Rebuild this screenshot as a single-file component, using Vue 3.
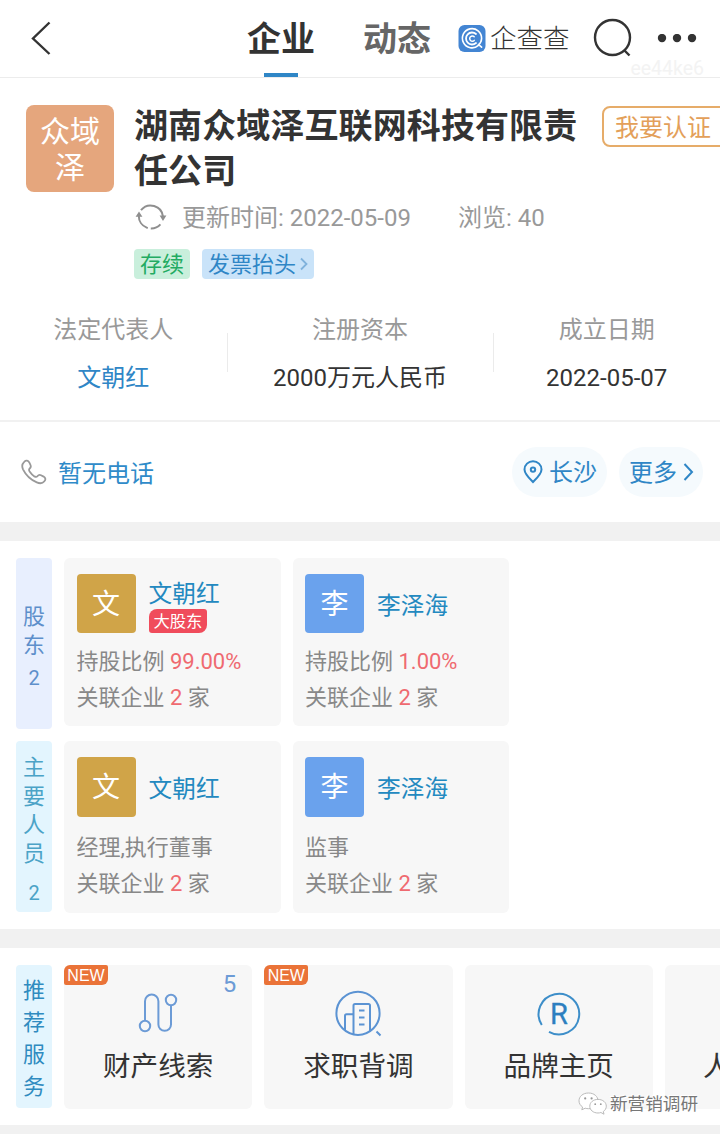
<template>
  <div class="page">
    <header class="topbar">
      <svg class="back" width="22" height="36" viewBox="0 0 22 36">
        <path d="M19.5 1.5 L3 17.5 L19.5 33" />
      </svg>
      <nav class="tabs">
        <span class="tab active">企业</span>
        <span class="tab">动态</span>
      </nav>
      <div class="brand">
        <svg width="28" height="28" viewBox="0 0 28 28">
          <rect x="0.5" y="0" width="27" height="27" rx="6" fill="#4385d3" />
          <g fill="none" stroke="#fff" stroke-linecap="round">
            <path d="M20.4 20.4 A9.6 9.6 0 1 1 23.6 13.5 Q23.4 17.5 20.6 19.6 L23.6 22.2" stroke-width="1.6" />
            <path d="M18 9 A6 6 0 1 0 18 18" stroke-width="1.8" />
            <path d="M16.2 11.8 A2.6 2.6 0 1 0 16.2 15.4" stroke-width="1.5" />
          </g>
        </svg>
        <span>企查查</span>
      </div>
      <svg class="search" width="40" height="42" viewBox="0 0 40 42">
        <circle cx="19.5" cy="19.5" r="17.5" />
        <path d="M31.5 32.5 L36.5 37.5" />
      </svg>
      <svg class="dots" width="40" height="10" viewBox="0 0 40 10">
        <circle cx="5" cy="4" r="4.2" />
        <circle cx="20" cy="4" r="4.2" />
        <circle cx="35" cy="4" r="4.2" />
      </svg>
      <span class="user-mark">ee44ke6</span>
    </header>

    <section class="profile">
      <div class="logo">众域<br />泽</div>
      <div class="profile-main">
        <h1>湖南众域泽互联网科技有限责任公司</h1>
        <div class="meta">
          <svg width="32" height="30" viewBox="0 0 32 30">
            <g fill="none" stroke="#8f8f8f" stroke-width="2">
              <path d="M6 7.2 A12.4 12.4 0 0 1 28 13.6" />
              <path d="M3.8 13 A12.4 12.4 0 0 0 25.4 21.4" stroke-dasharray="16 3 20" />
            </g>
            <path d="M0.6 13.8 L4 8.4 L7.4 13.8 Z M24.6 12.6 L31.4 12.6 L28 18 Z" fill="#8f8f8f" />
          </svg>
          <span class="updated">更新时间: 2022-05-09</span>
          <span>浏览: 40</span>
        </div>
        <div class="tags">
          <span class="tag green">存续</span>
          <span class="tag blue">发票抬头<svg width="8" height="14" viewBox="0 0 8 14"><path d="M1 1.5 L6.5 7 L1 12.5" /></svg></span>
        </div>
      </div>
      <div class="verify">我要认证</div>
    </section>

    <section class="stats">
      <div v-for="s in stats" :key="s.label" class="stat">
        <span class="stat-label">{{ s.label }}</span>
        <span class="stat-value" :class="{ link: s.link }">{{ s.value }}</span>
      </div>
    </section>

    <section class="contact">
      <svg width="26" height="26" viewBox="0 0 26 26">
        <path class="phone" d="M3.2 2.8 C5 1 7.2 1.4 8.4 3.6 L9.5 6 C10.2 7.6 9.8 8.6 8.7 9.5 C7.7 10.4 7.8 11.3 8.8 12.8 C10 14.6 11.6 16.3 13.4 17.4 C14.8 18.2 15.6 18.2 16.4 17.2 C17.4 16 18.6 15.6 20 16.3 L22.6 17.6 C24.6 18.8 24.9 20.6 23.4 22.2 C21.6 24.4 18.8 24.7 15.8 23.4 C9.6 20.6 4.8 16 2 10.3 C0.7 7.4 1 4.9 3.2 2.8 Z" />
      </svg>
      <span class="phone-text">暂无电话</span>
      <div class="pill city">
        <svg width="20" height="24" viewBox="0 0 20 24">
          <path d="M10 22 C6 18 1.5 13.8 1.5 9.4 A8.5 8.2 0 0 1 18.5 9.4 C18.5 13.8 14 18 10 22 Z" />
          <circle cx="10" cy="9.6" r="2.2" />
        </svg>
        <span>长沙</span>
      </div>
      <div class="pill more">
        <span>更多</span>
        <svg width="12" height="20" viewBox="0 0 12 20"><path d="M1.5 2 L9 10 L1.5 18" /></svg>
      </div>
    </section>

    <div class="band"></div>

    <section class="people">
      <div v-for="g in groups" :key="g.title" class="group" :class="g.kind">
        <div class="side">
          <span class="side-title">{{ g.title }}</span>
          <span class="side-count">2</span>
        </div>
        <div v-for="p in g.list" :key="p.name" class="person">
          <div class="person-head">
            <div class="face" :class="p.color">{{ p.name[0] }}</div>
            <div class="who">
              <span class="name">{{ p.name }}</span>
              <span v-if="p.badge" class="badge">{{ p.badge }}</span>
            </div>
          </div>
          <p class="line">{{ p.text }} <em v-if="p.ratio">{{ p.ratio }}</em></p>
          <p class="line">关联企业 <em>2</em> 家</p>
        </div>
      </div>
    </section>

    <div class="band"></div>

    <section class="services">
      <div class="side services-side"><span class="side-title">推荐服务</span></div>
      <div class="service">
        <span class="new">NEW</span>
        <span class="count">5</span>
        <svg width="50" height="50" viewBox="0 0 50 50">
          <g fill="none" stroke="#6c9bd6" stroke-width="2">
            <circle cx="12" cy="36" r="5.2" />
            <circle cx="38" cy="10" r="5.2" />
            <path d="M12 30.8 V11.2 A6.7 6.7 0 0 1 25.4 11.2 V34.5 A6.3 6.3 0 0 0 38 34.5 V15.2" />
          </g>
        </svg>
        <span class="service-name">财产线索</span>
      </div>
      <div class="service">
        <span class="new">NEW</span>
        <svg width="50" height="50" viewBox="0 0 50 50">
          <g fill="none" stroke="#5b93d3" stroke-width="2">
            <circle cx="25" cy="23.3" r="21.6" />
            <path d="M20.5 44 V15.5 Q20.5 14 22 14 H35.5 Q37 14 37 15.5 V41" />
            <path d="M20.5 24.3 H13.5 Q12 24.3 12 25.8 V40" />
            <path d="M26 20.5 H31.5 M26 27.5 H31.5 M26 34.5 H31.5 M43.5 41.5 L47.5 45.5" />
          </g>
        </svg>
        <span class="service-name">求职背调</span>
      </div>
      <div class="service">
        <svg width="50" height="50" viewBox="0 0 50 50">
          <path d="M7.8 35 A20.3 20.3 0 1 1 15 41.8" fill="none" stroke="#3d8ec9" stroke-width="2" />
          <text x="25" y="34" text-anchor="middle">R</text>
        </svg>
        <span class="service-name">品牌主页</span>
      </div>
      <div class="service cut"><span class="service-name">人</span></div>
    </section>

    <div class="band last"></div>

    <div class="account">
      <svg width="30" height="26" viewBox="0 0 30 26">
        <g fill="#fff" stroke="#bbb" stroke-width="1">
          <path d="M10.5 2 C5 2 1 5.4 1 9.8 C1 12.4 2.4 14.6 4.6 16 L3.8 18.8 L7.2 17.2 C8.3 17.5 9.4 17.7 10.5 17.7 C16 17.7 20 14.2 20 9.8 C20 5.4 16 2 10.5 2 Z" />
          <path d="M20 8.4 C15.2 8.4 11.8 11.4 11.8 15.2 C11.8 19 15.2 22 20 22 C21 22 22 21.8 22.9 21.5 L26 23.2 L25.3 20.5 C27.2 19.3 28.3 17.4 28.3 15.2 C28.3 11.4 24.8 8.4 20 8.4 Z" />
        </g>
        <g fill="#999">
          <circle cx="7.2" cy="7.4" r="1.1" /><circle cx="13.6" cy="7.4" r="1.1" />
          <circle cx="17.2" cy="13.2" r="0.9" /><circle cx="22.8" cy="13.2" r="0.9" />
        </g>
      </svg>
      <span>新营销调研</span>
    </div>
  </div>
</template>

<script setup>
const stats = [
  { label: "法定代表人", value: "文朝红", link: true },
  { label: "注册资本", value: "2000万元人民币" },
  { label: "成立日期", value: "2022-05-07" },
];

const groups = [
  {
    title: "股东",
    kind: "holders",
    list: [
      { name: "文朝红", color: "gold", badge: "大股东", text: "持股比例", ratio: "99.00%" },
      { name: "李泽海", color: "blue", text: "持股比例", ratio: "1.00%" },
    ],
  },
  {
    title: "主要人员",
    kind: "staff",
    list: [
      { name: "文朝红", color: "gold", text: "经理,执行董事" },
      { name: "李泽海", color: "blue", text: "监事" },
    ],
  },
];
</script>

<style>
body {
  margin: 0;
  background: #fff;
}
</style>

<style scoped>
.page {
  position: relative;
  width: 720px;
  height: 1134px;
  overflow: hidden;
  box-sizing: border-box;
  background: #fff;
  color: #333;
  font-family: Roboto, "Noto Sans CJK SC", sans-serif;
  font-size: 24px;
  line-height: 30px;
}

.page * {
  box-sizing: border-box;
}

svg {
  display: block;
  flex: none;
}

.topbar {
  position: relative;
  display: flex;
  align-items: center;
  height: 78px;
  border-bottom: 1px solid #ececec;
}

.back {
  margin-left: 30px;
  fill: none;
  stroke: #333;
  stroke-width: 2.4;
}

.tabs {
  display: flex;
  gap: 48px;
  align-self: stretch;
  margin-left: 195px;
}

.tab {
  width: 68px;
  height: 77px;
  color: #666;
  font-size: 34px;
  font-weight: 700;
  line-height: 79px;
}

.tab.active {
  color: #333;
}

.tab.active::after {
  content: "";
  display: block;
  width: 34px;
  height: 4px;
  margin: -6px auto 0;
  background: #2f86c6;
}

.brand {
  display: flex;
  align-items: center;
  gap: 4px;
  margin-left: 27px;
  height: 28px;
  font-size: 26.5px;
  font-weight: 300;
  line-height: 28px;
}

.search {
  margin-left: 23px;
  fill: none;
  stroke: #333;
  stroke-width: 2.4;
}

.dots {
  margin-left: 24px;
  fill: #333;
}

.user-mark {
  position: absolute;
  right: 16px;
  top: 57px;
  color: #f3f3f3;
  font-size: 19.5px;
  line-height: 24px;
}

.profile {
  display: flex;
  align-items: flex-start;
  height: 223px;
  padding: 27px 0 0 26px;
}

.logo {
  flex: none;
  width: 88px;
  height: 87px;
  padding-top: 9px;
  border-radius: 8px;
  background: #e5a67d;
  color: #fff;
  font-size: 30px;
  line-height: 36px;
  text-align: center;
}

.profile-main {
  flex: none;
  width: 444px;
  margin-left: 20px;
}

h1 {
  margin: -1px 0 0;
  font-size: 34px;
  font-weight: 700;
  line-height: 45px;
  letter-spacing: 0.1px;
}

.meta {
  display: flex;
  align-items: center;
  margin-top: 9px;
  height: 30px;
  margin-left: 1px;
  color: #999;
}

.updated {
  width: 276px;
  margin-left: 15px;
}

.tags {
  display: flex;
  gap: 12px;
  margin-top: 16px;
}

.tag {
  display: flex;
  align-items: center;
  height: 30px;
  padding: 2px 6px 0;
  border-radius: 4px;
  font-size: 22px;
}

.tag.green {
  background: #c9efdc;
  color: #22ab62;
}

.tag.blue {
  background: #c9e3f9;
  color: #2f86c6;
}

.tag svg {
  margin: -3px 0 0 4px;
  fill: none;
  stroke: #7fb2dc;
  stroke-width: 1.8;
}

.verify {
  flex: none;
  width: 130px;
  height: 41px;
  margin: 1px 0 0 24px;
  padding-left: 11px;
  border: 2px solid #e6ac69;
  border-radius: 8px;
  color: #e3a05a;
  line-height: 41px;
}

.stats {
  display: flex;
  height: 121px;
  padding-top: 14px;
  border-bottom: 2px solid #f1f1f1;
}

.stat {
  position: relative;
  display: flex;
  flex-direction: column;
  align-items: center;
  gap: 18px;
  width: 227px;
}

.stat:nth-child(2) {
  width: 267px;
}

.stat + .stat::before {
  content: "";
  position: absolute;
  left: 0;
  top: 18px;
  width: 1px;
  height: 39px;
  background: #ebebeb;
}

.stat-label {
  color: #999;
}

.stat-value {
  color: #333;
}

.stat-value.link {
  color: #2f86c6;
}

.contact {
  display: flex;
  align-items: center;
  height: 100px;
  padding: 0 17px 0 21px;
}

.phone {
  fill: none;
  stroke: #999;
  stroke-width: 1.8;
}

.phone-text {
  flex: 1;
  margin: 3px 0 0 11px;
  color: #2f8bc9;
}

.pill {
  display: flex;
  align-items: center;
  height: 50px;
  border-radius: 25px;
  background: #f5fafd;
  color: #2f86c6;
}

.pill span {
  padding-top: 2px;
}

.pill svg {
  fill: none;
  stroke: #2f86c6;
  stroke-width: 2;
}

.city {
  width: 95px;
  padding-left: 11px;
  gap: 6px;
}

.more {
  width: 84px;
  margin-left: 12px;
  padding-left: 10px;
  gap: 6px;
}

.band {
  height: 19px;
  background: #f1f1f1;
}

.people {
  display: flex;
  flex-direction: column;
  gap: 12px;
  height: 388px;
  padding: 17px 16px 0;
}

.group {
  display: flex;
  align-items: flex-start;
  gap: 12px;
}

.side {
  display: flex;
  flex: none;
  flex-direction: column;
  align-items: center;
  width: 36px;
  height: 171px;
  padding-top: 45px;
  border-radius: 4px;
  background: #e8effe;
  color: #5e8fcb;
}

.side-title {
  width: 22px;
  font-size: 22px;
  line-height: 28.7px;
}

.side-count {
  margin-top: 3px;
  font-size: 20px;
}

.staff .side {
  padding-top: 13px;
  background: #e3f5fe;
  color: #4ba3c7;
}

.staff .side-count {
  margin-top: 9px;
}

.person {
  width: 216.5px;
  height: 168px;
  padding: 16px 12px 0 12.5px;
  border-radius: 6px;
  background: #f7f7f7;
}

.staff .person {
  height: 172px;
}

.person-head {
  display: flex;
  gap: 13px;
  height: 59px;
  margin-bottom: 11px;
}

.staff .person-head {
  height: 60px;
  margin-bottom: 13px;
}

.face {
  flex: none;
  width: 59px;
  height: 100%;
  border-radius: 4px;
  color: #fff;
  font-size: 28px;
  line-height: 61px;
  text-align: center;
}

.face.gold {
  background: #d0a448;
}

.face.blue {
  background: #6aa2ed;
}

.who {
  display: flex;
  flex-direction: column;
  align-items: flex-start;
  justify-content: center;
  padding-top: 4px;
}

.name {
  color: #2389c0;
  font-size: 23.7px;
}

.badge {
  height: 24px;
  padding: 0 5px;
  border-radius: 8px 3px 8px 3px;
  background: #f04c5c;
  color: #fff;
  font-size: 16.3px;
  line-height: 25px;
}

.line {
  margin: 0;
  color: #888;
  font-size: 22px;
  line-height: 36px;
}

.line em {
  color: #ef6a70;
  font-style: normal;
}

.services {
  display: flex;
  gap: 12px;
  height: 177px;
  padding: 17px 0 0 16px;
}

.services-side {
  height: 143px;
  padding-top: 10px;
  background: #e3f5fe;
  color: #2f8bc0;
}

.services-side .side-title {
  line-height: 32px;
}

.service {
  position: relative;
  display: flex;
  flex: none;
  flex-direction: column;
  align-items: center;
  width: 188.3px;
  height: 144px;
  padding-top: 25px;
  border-radius: 6px;
  background: #f7f7f7;
}

.service text {
  fill: #2c7fc0;
  stroke: #2c7fc0;
  stroke-width: 0.3;
  font-size: 29px;
  font-weight: 400;
}

.service-name {
  margin-top: 9px;
  font-size: 27.6px;
  line-height: 36px;
}

.service.cut {
  align-items: flex-start;
  padding: 75px 0 0 38px;
}

.new {
  position: absolute;
  left: 0;
  top: 0;
  width: 44px;
  height: 20px;
  border-radius: 6px 2px 6px 2px;
  background: #ea7338;
  color: #fff;
  font-family: "Liberation Sans", sans-serif;
  font-size: 16px;
  line-height: 21px;
  text-align: center;
}

.count {
  position: absolute;
  right: 16px;
  top: 4px;
  color: #6c9bd6;
}

/* account mark lies over the last cards */
.account {
  position: absolute;
  left: 578px;
  top: 1091px;
  display: flex;
  align-items: center;
  gap: 2px;
  color: #777;
  font-size: 17.6px;
  line-height: 26px;
  text-shadow: 1px 1px 0 #fff, -1px -1px 0 #fff;
}
</style>
